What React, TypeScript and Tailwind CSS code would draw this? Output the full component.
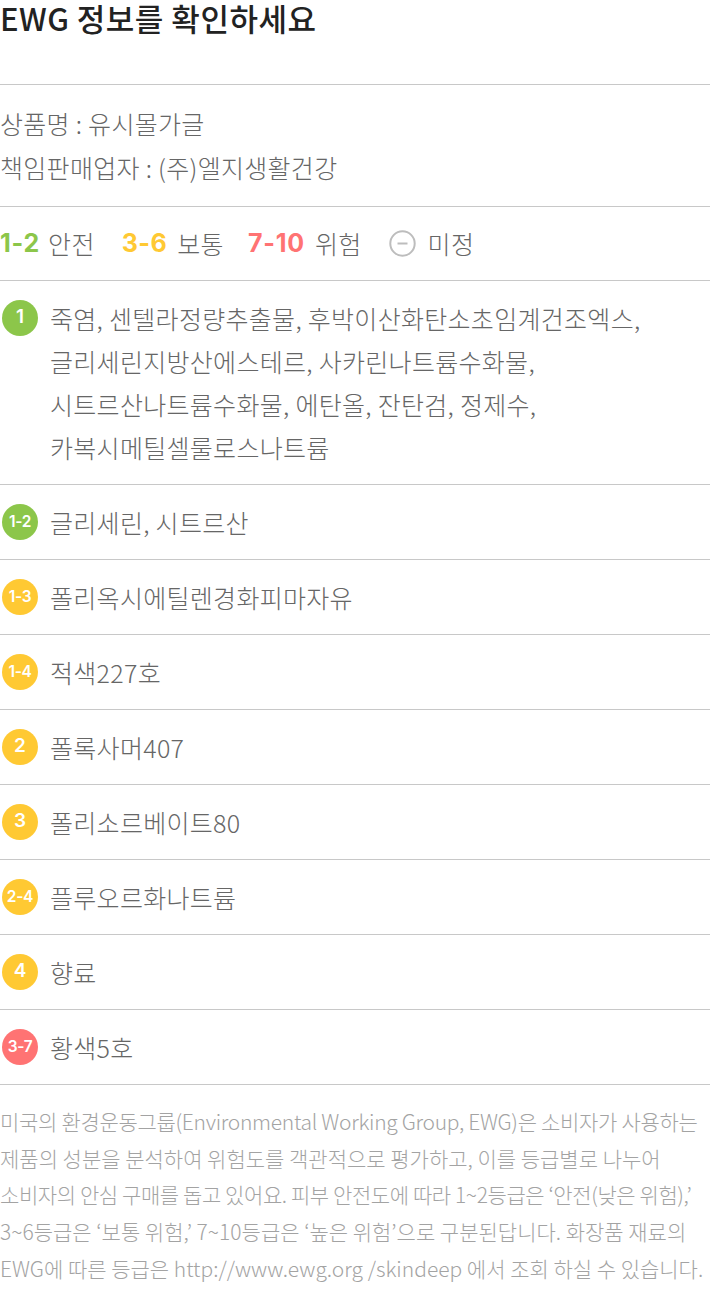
import React from 'react';

type Level = 'safe' | 'mid' | 'risk';

interface Ingredient {
  grade: string;
  level: Level;
  lines: string[];
}

const badgeColor: Record<Level, string> = {
  safe: 'bg-[#8cc64a]',
  mid: 'bg-[#ffc933]',
  risk: 'bg-[#ff7373]',
};

const ingredients: Ingredient[] = [
  {
    grade: '1',
    level: 'safe',
    lines: [
      '죽염, 센텔라정량추출물, 후박이산화탄소초임계건조엑스,',
      '글리세린지방산에스테르, 사카린나트륨수화물,',
      '시트르산나트륨수화물, 에탄올, 잔탄검, 정제수,',
      '카복시메틸셀룰로스나트륨',
    ],
  },
  { grade: '1-2', level: 'safe', lines: ['글리세린, 시트르산'] },
  { grade: '1-3', level: 'mid', lines: ['폴리옥시에틸렌경화피마자유'] },
  { grade: '1-4', level: 'mid', lines: ['적색227호'] },
  { grade: '2', level: 'mid', lines: ['폴록사머407'] },
  { grade: '3', level: 'mid', lines: ['폴리소르베이트80'] },
  { grade: '2-4', level: 'mid', lines: ['플루오르화나트륨'] },
  { grade: '4', level: 'mid', lines: ['향료'] },
  { grade: '3-7', level: 'risk', lines: ['황색5호'] },
];

const kr = "font-['Noto_Sans_CJK_KR','Noto_Sans',sans-serif]";
const num = "font-['Inter','Noto_Sans',sans-serif]";

const Badge = ({ grade, level }: { grade: string; level: Level }) => (
  <div
    className={`ml-[2px] mt-[3px] flex h-[36px] w-[36px] shrink-0 items-center justify-center rounded-full text-white ${badgeColor[level]} ${num} ${
      grade.length > 1 ? 'text-[15.5px] font-semibold tracking-[-0.3px]' : 'text-[19px] font-semibold'
    }`}
  >
    {grade}
  </div>
);

export default function App() {
  return (
    <div className={`w-[710px] bg-white ${kr}`}>
      {/* title */}
      <div className="h-[85px] border-b border-[#c8c8c8]">
        <h2 className="text-[31px] font-medium leading-[36px] tracking-[0.5px] text-[#222]">
          EWG 정보를 확인하세요
        </h2>
      </div>

      {/* product info */}
      <div className="border-b border-[#c8c8c8] pb-[17px] pt-[16px] text-[25px] font-light leading-[44px] tracking-[0.3px] text-[#666]">
        <p>상품명 : 유시몰가글</p>
        <p>책임판매업자 : (주)엘지생활건강</p>
      </div>

      {/* legend */}
      <div className="flex h-[74px] items-center border-b border-[#c8c8c8] text-[25px] font-light tracking-[0.3px] text-[#666]">
        <span className={`${num} font-bold tracking-[0.8px] text-[#8cc64a]`}>1-2</span>
        <span className="ml-[8px]">안전</span>
        <span className={`${num} ml-[27px] font-bold tracking-[0.5px] text-[#ffc933]`}>3-6</span>
        <span className="ml-[10px]">보통</span>
        <span className={`${num} ml-[24px] font-bold tracking-[0.8px] text-[#ff7373]`}>7-10</span>
        <span className="ml-[10px]">위험</span>
        <svg className="ml-[27px]" width="27" height="27" viewBox="0 0 27 27">
          <circle cx="13.5" cy="13.5" r="12.2" fill="none" stroke="#bdbdbd" strokeWidth="2" />
          <line x1="8.5" y1="13.5" x2="18.5" y2="13.5" stroke="#bdbdbd" strokeWidth="2" />
        </svg>
        <span className="ml-[12px]">미정</span>
      </div>

      {/* ingredients */}
      <ul>
        {ingredients.map((it) => (
          <li
            key={it.grade + it.lines[0]}
            className="flex items-start gap-[12px] border-b border-[#c8c8c8] py-[15.5px]"
          >
            <Badge grade={it.grade} level={it.level} />
            <div className="flex-1 text-[25px] font-light leading-[43px] tracking-[0.3px] text-[#666]">
              {it.lines.map((l) => (
                <p key={l} className="whitespace-nowrap">
                  {l}
                </p>
              ))}
            </div>
          </li>
        ))}
      </ul>

      {/* footer note */}
      <div className="pb-[10px] pt-[18px] text-[21px] font-light leading-[36.7px] text-[#a3a3a3]">
        <p className="whitespace-nowrap tracking-[-0.3px]">
          미국의 환경운동그룹(Environmental Working Group, EWG)은 소비자가 사용하는
        </p>
        <p className="whitespace-nowrap">제품의 성분을 분석하여 위험도를 객관적으로 평가하고, 이를 등급별로 나누어</p>
        <p className="whitespace-nowrap tracking-[-0.4px]">
          소비자의 안심 구매를 돕고 있어요. 피부 안전도에 따라 1~2등급은 ‘안전(낮은 위험),’
        </p>
        <p className="whitespace-nowrap">3~6등급은 ‘보통 위험,’ 7~10등급은 ‘높은 위험’으로 구분된답니다. 화장품 재료의</p>
        <p className="whitespace-nowrap">EWG에 따른 등급은 http://www.ewg.org /skindeep 에서 조회 하실 수 있습니다.</p>
      </div>
    </div>
  );
}
